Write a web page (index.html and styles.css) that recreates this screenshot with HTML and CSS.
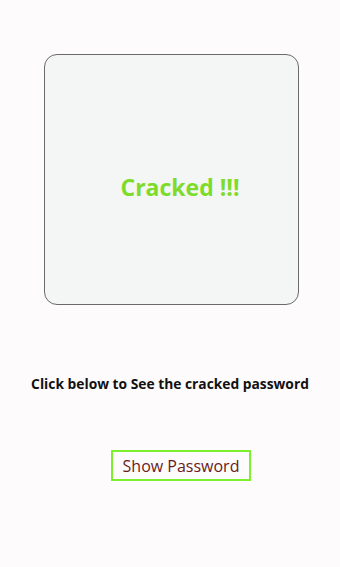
FILE: index.html
```html
<!DOCTYPE html>
<html>
<head>
<meta charset="utf-8">
<link rel="stylesheet" href="styles.css">
</head>
<body>
<div class="page">
  <div class="card">
    <div class="status">Cracked !!!</div>
  </div>
  <div class="hint">Click below to See the cracked password</div>
  <div class="action">
    <button class="show-btn">Show Password</button>
  </div>
</div>
</body>
</html>
```

FILE: styles.css
```css
html, body {
  margin: 0;
  padding: 0;
  background: #fdfbfc;
}
body {
  font-family: "Open Sans", "Noto Sans", sans-serif;
  width: 340px;
  height: 567px;
  overflow: hidden;
}
.page {
  display: flex;
  flex-direction: column;
}
.card {
  box-sizing: border-box;
  margin: 54px 0 0 44px;
  width: 255px;
  height: 251px;
  border: 1px solid #6a6a6a;
  border-radius: 13px;
  background: #f4f5f5;
  display: flex;
  align-items: center;
  justify-content: center;
  padding: 16px 0 0 17px;
}
.status {
  color: #7ddc2a;
  font-weight: 700;
  font-size: 23px;
  line-height: 1;
}
.hint {
  margin-top: 69px;
  text-align: center;
  font-weight: 700;
  font-size: 13.8px;
  color: #111;
  line-height: 20px;
}
.action {
  margin-top: 56px;
  padding-left: 111px;
  display: flex;
}
.show-btn {
  box-sizing: border-box;
  width: 140px;
  height: 31px;
  border: 2px solid #7cf02a;
  background: transparent;
  color: #6a1b1b;
  font-family: "Open Sans", "Noto Sans", sans-serif;
  font-size: 16px;
  padding: 0;
  line-height: 1;
}
```
